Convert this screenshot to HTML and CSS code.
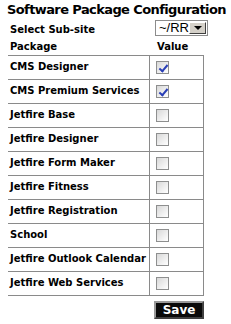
FILE: index.html
```html
<!DOCTYPE html>
<html lang="en">

<head>
    <meta charset="UTF-8">
    <title>Software Package Configuration</title>
    <link rel="stylesheet" href="styles.css">
</head>

<body>
    <div class="page">
        <h1 class="title">Software Package Configuration</h1>

        <div class="subsite">
            <span class="subsiteLabel">Select Sub-site</span>
            <span class="selectBox">
                <select class="siteSelect">
                    <option>~/RR</option>
                </select>
                <span class="selectArrow"></span>
            </span>
        </div>

        <div class="heads">
            <span class="headPackage">Package</span>
            <span class="headValue">Value</span>
        </div>

        <table class="packages">
            <tr><td class="name">CMS Designer</td><td class="val"><input type="checkbox" checked></td></tr>
            <tr><td class="name">CMS Premium Services</td><td class="val"><input type="checkbox" checked></td></tr>
            <tr><td class="name">Jetfire Base</td><td class="val"><input type="checkbox"></td></tr>
            <tr><td class="name">Jetfire Designer</td><td class="val"><input type="checkbox"></td></tr>
            <tr><td class="name">Jetfire Form Maker</td><td class="val"><input type="checkbox"></td></tr>
            <tr><td class="name">Jetfire Fitness</td><td class="val"><input type="checkbox"></td></tr>
            <tr><td class="name">Jetfire Registration</td><td class="val"><input type="checkbox"></td></tr>
            <tr><td class="name">School</td><td class="val"><input type="checkbox"></td></tr>
            <tr><td class="name">Jetfire Outlook Calendar</td><td class="val"><input type="checkbox"></td></tr>
            <tr><td class="name">Jetfire Web Services</td><td class="val"><input type="checkbox"></td></tr>
        </table>

        <div class="saveRow">
            <button class="save">Save</button>
        </div>
    </div>
</body>

</html>
```

FILE: styles.css
```css
body {
    margin: 0;
    background: #ffffff;
    font-family: "DejaVu Sans", Verdana, sans-serif;
    color: #000000;
}

.page {
    padding: 2px 0 0 7px;
}

.title {
    margin: 0;
    font-size: 13px;
    letter-spacing: -0.6px;
    line-height: 16px;
    font-weight: bold;
    white-space: nowrap;
}

.subsite {
    display: flex;
    flex-direction: row;
    margin-top: 2px;
    height: 16px;
}

.subsiteLabel {
    width: 145px;
    padding-left: 3px;
    padding-top: 4px;
    font-size: 10px;
    line-height: 12px;
    font-weight: bold;
}

.selectBox {
    position: relative;
    width: 53px;
    height: 16px;
}

.siteSelect {
    appearance: none;
    -webkit-appearance: none;
    display: block;
    width: 53px;
    height: 16px;
    margin: 0;
    padding: 0 0 0 3px;
    border: 1px solid #8c8c8c;
    border-radius: 0;
    background: #ffffff;
    font-family: "Liberation Sans", Arial, sans-serif;
    font-size: 13px;
    line-height: 14px;
    color: #000000;
}

.selectArrow {
    position: absolute;
    right: 2px;
    top: 2px;
    width: 17px;
    height: 12px;
    background: #d4d0c8;
    border: 1px solid #ffffff;
    border-right-color: #404040;
    border-bottom-color: #404040;
    box-sizing: border-box;
}

.selectArrow::after {
    content: "";
    position: absolute;
    left: 4px;
    top: 3px;
    border-left: 4px solid transparent;
    border-right: 4px solid transparent;
    border-top: 4px solid #000000;
}

.heads {
    display: flex;
    flex-direction: row;
    margin-top: 5px;
    font-size: 10px;
    line-height: 12px;
    font-weight: bold;
}

.headPackage {
    width: 147px;
    padding-left: 3px;
}

.packages {
    margin: 2px 0 0 1px;
    border-collapse: collapse;
    border-spacing: 0;
}

.packages td {
    height: 24px;
    padding: 0;
    vertical-align: top;
    border-top: 1px solid #8a8a8a;
    border-bottom: 1px solid #8a8a8a;
    box-sizing: border-box;
}

.name {
    width: 141px;
    padding: 5px 0 0 2px !important;
    font-size: 10px;
    line-height: 12px;
    font-weight: bold;
    white-space: nowrap;
    border-right: 1px solid #8a8a8a;
}

.val {
    width: 54px;
    padding: 5px 0 0 6px !important;
    border-right: 1px solid #8a8a8a;
}

.val input {
    appearance: none;
    -webkit-appearance: none;
    position: relative;
    display: block;
    width: 13px;
    height: 13px;
    margin: 0;
    border: 1px solid #8e8f8f;
    background: linear-gradient(135deg, #d8d8d8 0%, #f4f4f4 70%, #ffffff 100%);
    box-sizing: border-box;
}

.val input:checked::after {
    content: "";
    position: absolute;
    left: 4px;
    top: 1px;
    width: 3px;
    height: 7px;
    border-right: 2px solid #2a3fb6;
    border-bottom: 2px solid #2a3fb6;
    transform: rotate(40deg);
}

.saveRow {
    padding: 3px 0 0 147px;
}

.save {
    width: 50px;
    height: 18px;
    padding: 0;
    background: #0a0a0a;
    color: #ffffff;
    font-family: "DejaVu Sans", Verdana, sans-serif;
    font-size: 12px;
    line-height: 14px;
    font-weight: bold;
    border: 2px solid;
    border-color: #9a9a9a #404040 #404040 #9a9a9a;
    border-radius: 0;
}
```
